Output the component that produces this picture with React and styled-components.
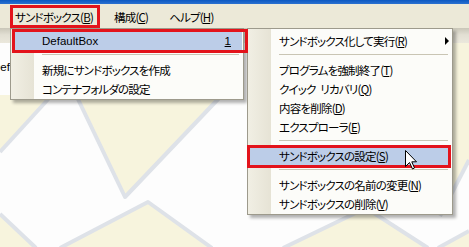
import React from 'react';
import styled, { createGlobalStyle } from 'styled-components';

const GlobalStyle = createGlobalStyle`
  html, body {
    margin: 0;
    padding: 0;
    background: #fff;
  }
`;

const jp = `"Noto Sans CJK JP", "Liberation Sans", sans-serif`;
const latin = `"Liberation Sans", "DejaVu Sans", sans-serif`;

const Window = styled.div`
  position: relative;
  width: 469px;
  height: 247px;
  overflow: hidden;
  display: flex;
  flex-direction: column;
  font-family: ${jp};
  font-size: 11.5px;
  font-feature-settings: 'palt';
  letter-spacing: -0.8px;
  word-spacing: 3px;
  color: #000;
`;

const TitleStrip = styled.div`
  height: 4px;
  background: linear-gradient(#0b58c2, #2b71d0);
`;

const MenuBar = styled.div`
  display: flex;
  gap: 11px;
  height: 24px;
  padding: 1px 0 0 10px;
  box-sizing: border-box;
  background: #ece9d8;
`;

const BarItem = styled.div`
  display: flex;
  align-items: center;
  height: 23px;
  padding: 0 2px;
  box-sizing: border-box;
  border: 3px solid transparent;
  white-space: nowrap;
`;

const ToolStrip = styled.div`
  height: 15px;
  background: linear-gradient(#c9c6b8, #e2dfd3 45%, #ebe8dc);
`;

const Body = styled.div`
  position: relative;
  flex: 1;
  background: #fdfdfd;
`;

const Backdrop = styled.svg`
  position: absolute;
  left: 0;
  top: 0;
`;

const TreeLabel = styled.div`
  position: relative;
  margin: 17px 0 0 -8px;
  font-family: ${latin};
  font-size: 11.5px;
  letter-spacing: 0;
  line-height: 14px;
`;

const Menu = styled.div`
  position: absolute;
  left: ${p => p.$left}px;
  top: ${p => p.$top}px;
  width: ${p => p.$width}px;
  box-sizing: border-box;
  padding: 2px 0 1px;
  border: 1px solid #9d9a8c;
  background: linear-gradient(to right, #f1efe4, #e6e3d5 23px, #fcfcf9 23px);
  box-shadow: 3px 3px 3px rgba(0, 0, 0, 0.3);
`;

const Row = styled.div`
  display: flex;
  align-items: center;
  height: 19px;
  margin: 0 1px;
  padding: 0 ${p => p.$padRight ?? 8}px 0 30px;
  background: ${p => (p.$active ? '#bccde8' : 'transparent')};
  font-family: ${p => (p.$latin ? latin : jp)};
  letter-spacing: ${p => (p.$latin ? '0' : '-0.8px')};
  white-space: pre;
`;

const Shortcut = styled.span`
  margin-left: auto;
  text-decoration: underline;
`;

const SubArrow = styled.span`
  margin-left: auto;
  width: 0;
  height: 0;
  border-left: 4px solid #000;
  border-top: 4px solid transparent;
  border-bottom: 4px solid transparent;
`;

const Separator = styled.div`
  height: 1px;
  margin: 4px 4px 5px 31px;
  background: #c9c5b4;
`;

const Callout = styled.div`
  position: absolute;
  left: ${p => p.$x}px;
  top: ${p => p.$y}px;
  width: ${p => p.$w}px;
  height: ${p => p.$h}px;
  box-sizing: border-box;
  border: 3px solid #e3131b;
  pointer-events: none;
`;

const Pointer = styled.svg`
  position: absolute;
  left: 405px;
  top: 150px;
`;

const cream = '#f7f4dd';
const seam = '#dee2e8';

const shapes = [
  '0,95 52,95 0,152',
  '76,95 125,197 222,95',
  '60,248 148,202 212,248',
  '0,214 36,248 0,248',
  '283,248 366,208 428,248',
  '438,248 469,231 469,248',
  '440,43 469,43 469,160 440,216',
];

const seams = [
  '0,152 52,95',
  '76,95 125,197 222,95',
  '60,248 148,202 212,248',
  '0,214 36,248',
  '283,248 366,208 428,248',
  '438,248 469,231',
  '469,160 440,216',
];

const Acc = ({ k }) => (
  <>
    (<u>{k}</u>)
  </>
);

const App = () => (
  <Window>
    <GlobalStyle />
    <TitleStrip />
    <MenuBar>
      <BarItem>
        サンドボックス<Acc k="B" />
      </BarItem>
      <BarItem>
        構成<Acc k="C" />
      </BarItem>
      <BarItem>
        ヘルプ<Acc k="H" />
      </BarItem>
    </MenuBar>
    <ToolStrip />
    <Body>
      <Backdrop width="469" height="204" viewBox="0 43 469 204">
        {shapes.map(s => (
          <polygon key={s} points={s} fill={cream} />
        ))}
        {seams.map(s => (
          <polyline
            key={s}
            points={s}
            fill="none"
            stroke={seam}
            strokeWidth="4"
            strokeLinejoin="round"
          />
        ))}
      </Backdrop>
      <TreeLabel>DefaultBox</TreeLabel>
    </Body>

    <Menu $left={10} $top={28} $width={234}>
      <Row $active $latin $padRight={11}>
        DefaultBox
        <Shortcut>1</Shortcut>
      </Row>
      <Separator />
      <Row>新規にサンドボックスを作成</Row>
      <Row>コンテナフォルダの設定</Row>
    </Menu>

    <Menu $left={247} $top={28} $width={206}>
      <Row $padRight={2}>
        サンドボックス化して実行<Acc k="R" />
        <SubArrow />
      </Row>
      <Separator />
      <Row>
        プログラムを強制終了<Acc k="T" />
      </Row>
      <Row>
        クイック リカバリ<Acc k="Q" />
      </Row>
      <Row>
        内容を削除<Acc k="D" />
      </Row>
      <Row>
        エクスプローラ<Acc k="E" />
      </Row>
      <Separator />
      <Row $active>
        サンドボックスの設定<Acc k="S" />
      </Row>
      <Separator />
      <Row>
        サンドボックスの名前の変更<Acc k="N" />
      </Row>
      <Row>
        サンドボックスの削除<Acc k="V" />
      </Row>
    </Menu>

    <Callout $x={10} $y={5} $w={90} $h={23} />
    <Callout $x={12} $y={29} $w={236} $h={24} />
    <Callout $x={247} $y={145} $w={204} $h={23} />

    <Pointer width="13" height="20" viewBox="0 0 13 20">
      <path
        d="M0.5 0.5 L0.5 16.5 L4.5 12.5 L7.5 19 L9.5 18 L6.8 11.8 L11.5 11.8 Z"
        fill="#fff"
        stroke="#000"
        strokeWidth="1"
        strokeLinejoin="miter"
      />
    </Pointer>
  </Window>
);

export default App;
